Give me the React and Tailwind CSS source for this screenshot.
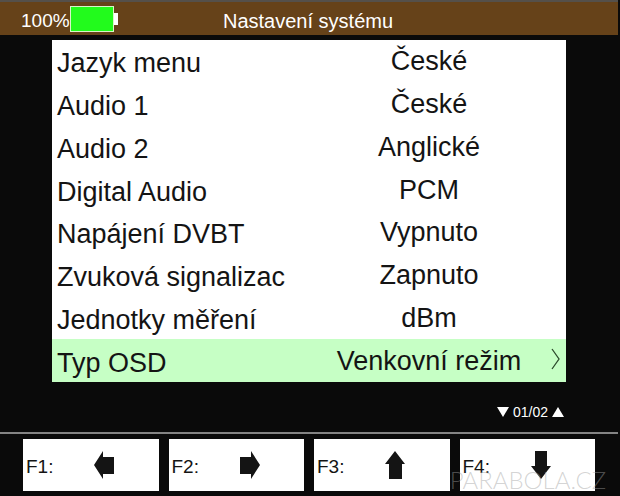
import React, { useState } from 'react';

const settings = [
  { label: 'Jazyk menu', value: 'České' },
  { label: 'Audio 1', value: 'České' },
  { label: 'Audio 2', value: 'Anglické' },
  { label: 'Digital Audio', value: 'PCM' },
  { label: 'Napájení DVBT', value: 'Vypnuto' },
  { label: 'Zvuková signalizac', value: 'Zapnuto' },
  { label: 'Jednotky měření', value: 'dBm' },
  { label: 'Typ OSD', value: 'Venkovní režim' },
];

const keys = [
  { name: 'F1:', action: 'Vlevo', points: '0,14 9,0 9,6 20,6 20,23 9,23 9,28' },
  { name: 'F2:', action: 'Vpravo', points: '20,14 11,0 11,6 0,6 0,23 11,23 11,28' },
  { name: 'F3:', action: 'Nahoru', points: '10,0 20,13 17,13 17,28 4,28 4,13 0,13' },
  { name: 'F4:', action: 'Dolů', points: '10,28 20,15 16,15 16,0 4,0 4,15 0,15' },
];

function Battery() {
  return (
    <div className="flex items-center">
      <div className="w-11 h-[26px] bg-[#22fb1c] border border-[#d8f5c8]" />
      <div className="w-1 h-3 bg-white" />
    </div>
  );
}

function SettingRow({ label, value, selected, onSelect }) {
  return (
    <li className="flex">
      <button
        type="button"
        onClick={onSelect}
        className={
          selected
            ? 'relative flex-1 flex items-center bg-[#c6ffc5] text-left whitespace-nowrap'
            : 'relative flex-1 flex items-center bg-white text-left whitespace-nowrap'
        }
      >
        <span className="w-[240px] shrink-0 pl-[5px] pt-1">{label}</span>
        <span className="flex-1 text-center">{value}</span>
        {selected && (
          <svg className="absolute right-1 top-2 w-3 h-6" viewBox="0 0 12 24" fill="none" stroke="#2c4a2c">
            <path d="M2 2 L9 12 L2 22" strokeWidth="1.3" />
          </svg>
        )}
      </button>
    </li>
  );
}

export default function App() {
  const [selected, setSelected] = useState(7);

  return (
    <div className="relative min-h-screen overflow-hidden bg-[#0a0a0a] font-['Liberation_Sans',Arial,sans-serif] text-[#141414]">
      {/* Title bar */}
      <header className="mr-[2px] border-t-2 border-[#55504a] bg-[#664219] h-[35px] pl-[21px] grid grid-cols-[202px_1fr] items-center text-white">
        <div className="flex items-center text-[19px] leading-6">
          <span className="pt-1">100%</span>
          <Battery />
        </div>
        <h1 className="pt-1 text-[20px] leading-6">Nastavení systému</h1>
      </header>

      {/* Settings list */}
      <main className="pt-[5px] pl-[52px] pr-[54px]">
        <ul className="grid grid-rows-8 h-[342px] text-[27px] leading-8">
          {settings.map((item, i) => (
            <SettingRow
              key={item.label}
              label={item.label}
              value={item.value}
              selected={i === selected}
              onSelect={() => setSelected(i)}
            />
          ))}
        </ul>

        <div className="flex items-center justify-end gap-1 h-[50px] pt-[10px] pr-[2px] text-[14px] leading-5 text-white">
          <button type="button" aria-label="Další strana">
            <svg className="w-3 h-[10px]" viewBox="0 0 12 10" fill="currentColor">
              <polygon points="0,0 12,0 6,10" />
            </svg>
          </button>
          <span>01/02</span>
          <button type="button" aria-label="Předchozí strana">
            <svg className="w-3 h-[10px]" viewBox="0 0 12 10" fill="currentColor">
              <polygon points="0,10 12,10 6,0" />
            </svg>
          </button>
        </div>
      </main>

      {/* Function keys */}
      <footer className="mr-[2px] border-t-2 border-[#848484] pt-[5px] pl-[23px] pr-[23px] grid grid-cols-4 gap-[10px]">
        {keys.map((key) => (
          <button
            key={key.name}
            type="button"
            aria-label={key.name + ' ' + key.action}
            className="h-[52px] bg-white pl-[3px] flex items-center"
          >
            <span className="w-[68px] pt-1 text-left text-[19px] leading-6">
              {key.name}
            </span>
            <svg className="w-5 h-7" viewBox="0 0 20 28" fill="#141414">
              <polygon points={key.points} />
            </svg>
          </button>
        ))}
      </footer>

      {/* Watermark */}
      <div className="absolute right-[14px] bottom-0 text-[24px] leading-8 font-light font-['Lato',sans-serif] text-[#a0a0a0]/45 pointer-events-none">
        PARABOLA.CZ
      </div>
    </div>
  );
}
